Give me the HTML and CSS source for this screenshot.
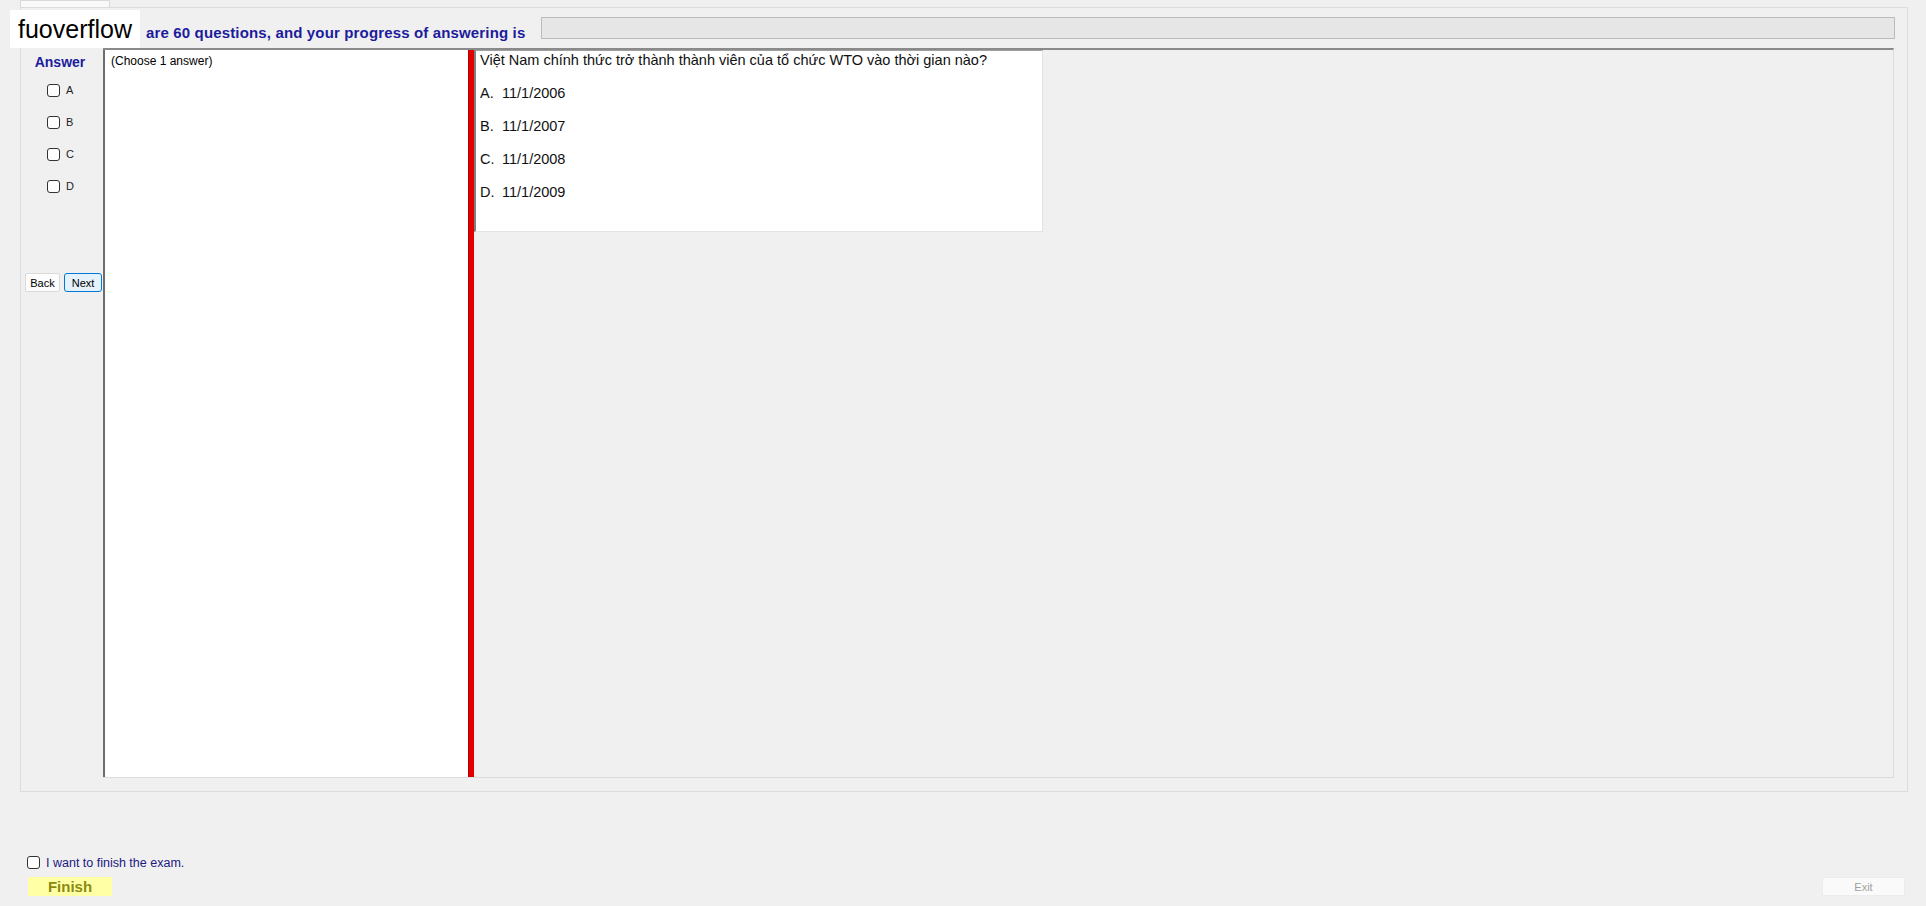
FILE: index.html
```html
<!DOCTYPE html>
<html>
<head>
<meta charset="utf-8">
<link rel="stylesheet" href="styles.css">
</head>
<body>
<div class="tabstrip"><div class="tab"></div></div>
<div class="tabpage">
  <div class="header">
    <span class="title">are 60 questions, and your progress of answering is</span>
    <div class="progress"></div>
  </div>
  <div class="main">
    <div class="answers">
      <div class="ans-title">Answer</div>
      <div class="opt"><span class="cb"></span><span>A</span></div>
      <div class="opt"><span class="cb"></span><span>B</span></div>
      <div class="opt"><span class="cb"></span><span>C</span></div>
      <div class="opt"><span class="cb"></span><span>D</span></div>
      <div class="nav"><button class="btn">Back</button><button class="btn next">Next</button></div>
    </div>
    <div class="content">
      <div class="choose">(Choose 1 answer)</div>
      <div class="splitter"></div>
      <div class="qarea">
        <div class="qbox">
          <div class="qtext">Việt Nam chính thức trở thành thành viên của tổ chức WTO vào thời gian nào?</div>
          <div class="qopt"><span class="qlet">A.</span>11/1/2006</div>
          <div class="qopt"><span class="qlet">B.</span>11/1/2007</div>
          <div class="qopt"><span class="qlet">C.</span>11/1/2008</div>
          <div class="qopt"><span class="qlet">D.</span>11/1/2009</div>
        </div>
      </div>
    </div>
  </div>
</div>
<div class="footer">
  <div class="finish-col">
    <div class="finish-check"><span class="cb"></span><span>I want to finish the exam.</span></div>
    <button class="finish">Finish</button>
  </div>
  <button class="exit">Exit</button>
</div>
<div class="watermark">fuoverflow</div>
</body>
</html>
```

FILE: styles.css
```css
* { box-sizing: border-box; }
html, body { margin: 0; padding: 0; }
body {
  background: #f0f0f0;
  font-family: "Liberation Sans", Arial, sans-serif;
  width: 1926px;
  height: 906px;
  overflow: hidden;
  position: relative;
  color: #000;
}
.tabstrip { height: 7px; padding-left: 20px; }
.tab {
  width: 90px; height: 7px;
  background: #f9f9f9;
  border: 1px solid #d9d9d9; border-bottom: none;
}
.tabpage {
  margin-left: 20px;
  width: 1888px;
  height: 785px;
  border: 1px solid #dcdcdc;
  background: #f0f0f0;
  display: flex;
  flex-direction: column;
}
.header {
  height: 40px;
  display: flex;
  align-items: flex-start;
  padding-left: 125px;
  padding-right: 12px;
}
.title {
  margin-top: 16px;
  font-size: 15px;
  letter-spacing: 0.15px;
  line-height: 17px;
  font-weight: bold;
  color: #1c1c9c;
  white-space: nowrap;
}
.progress {
  flex: 1;
  margin-left: 16px;
  margin-top: 9px;
  height: 22px;
  background: #e6e6e6;
  border: 1px solid #bcbcbc;
}
.main { height: 730px; display: flex; }
.answers {
  width: 82px;
  padding-top: 6px;
  display: flex;
  flex-direction: column;
}
.ans-title {
  height: 16px; line-height: 16px;
  text-align: center;
  font-size: 14px; font-weight: bold;
  color: #1c1c9c;
  margin-bottom: 12px;
  padding-right: 4px;
}
.opt {
  height: 16px;
  display: flex; align-items: center; gap: 6px;
  padding-left: 26px;
  margin-bottom: 16px;
  font-size: 11px;
  color: #222;
}
.cb {
  width: 13px; height: 13px;
  border: 1px solid #333;
  border-radius: 3px;
  background: #fff;
  flex: none;
}
.nav { margin-top: 63px; padding-left: 4px; display: flex; gap: 4px; }
.btn {
  height: 19px; padding: 0;
  font-family: "Liberation Sans", Arial, sans-serif;
  font-size: 11px; color: #000;
  background: #fdfdfd;
  border: 1px solid #dadada;
  border-radius: 2px;
  width: 35px;
}
.btn.next {
  width: 38px;
  background: #e5f1fb;
  border: 1px solid #0078d7;
  border-radius: 3px;
}
.content {
  flex: 1;
  margin-right: 13px;
  display: flex;
  border-top: 2px solid #8a8a8a;
  border-right: 1px solid #dcdcdc;
  border-bottom: 1px solid #dcdcdc;
}
.choose {
  width: 365px;
  background: #fff;
  border-left: 2px solid #6d6d6d;
  font-size: 12px;
  padding: 4px 6px;
  line-height: 14px;
}
.splitter { width: 6px; background: #e00000; border-left: 1px solid #b00000; }
.qarea { flex: 1; }
.qbox {
  width: 569px; height: 182px;
  background: #fff;
  border-left: 2px solid #808080;
  border-top: 1px solid #a0a0a0;
  border-right: 1px solid #e3e3e3;
  border-bottom: 1px solid #e3e3e3;
  padding: 0 0 0 4px;
  font-size: 14.5px;
  color: #111;
}
.qtext { height: 18px; line-height: 18px; }
.qopt { margin-top: 15px; height: 18px; line-height: 18px; }
.qlet { display: inline-block; width: 22px; }
.footer {
  margin-top: 63px;
  display: flex;
  justify-content: space-between;
  align-items: flex-end;
  padding-right: 21px;
}
.finish-col { display: flex; flex-direction: column; }
.finish-check {
  padding-left: 27px;
  height: 15px;
  display: flex; align-items: center; gap: 6px;
  font-size: 12.5px;
  color: #1a1a80;
}
.finish {
  margin-top: 7px;
  margin-left: 28px;
  width: 84px; height: 19px;
  padding: 0;
  background: #ffffa6;
  border: none;
  font-family: "Liberation Sans", Arial, sans-serif;
  font-size: 15px; font-weight: bold;
  color: #8a8a10;
}
.exit {
  width: 83px; height: 19px;
  padding: 0;
  background: #fafafa;
  border: 1px solid #ececec;
  font-family: "Liberation Sans", Arial, sans-serif;
  font-size: 11px;
  color: #a0a0a0;
}
.watermark {
  position: absolute;
  left: 10px; top: 10px;
  width: 130px; height: 38px;
  background: #fff;
  font-size: 25px;
  line-height: 38px;
  padding-left: 8px;
  color: #000;
}
```
